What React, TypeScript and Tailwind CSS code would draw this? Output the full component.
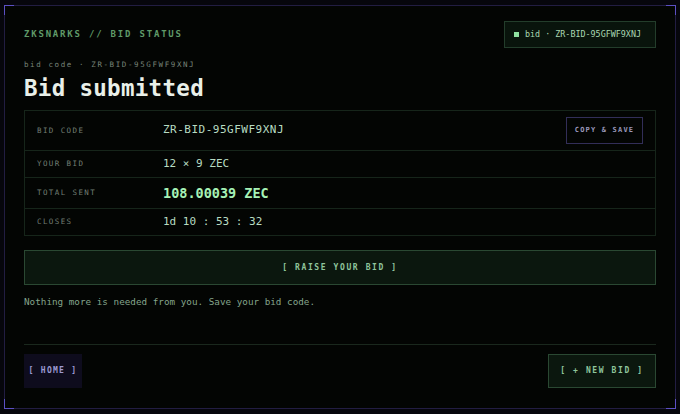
import type { ReactNode } from 'react'

const mono = { fontFamily: '"DejaVu Sans Mono", "Liberation Mono", monospace' }

interface RowProps {
  label: string
  height: string
  last?: boolean
  children: ReactNode
}

function Row({ label, height, last, children }: RowProps) {
  return (
    <div
      className={`flex items-center px-3 ${height} ${last ? '' : 'border-b border-[#16251a]'}`}
    >
      <span className="w-[126px] shrink-0 text-[7.5px] tracking-[1.4px] text-[#727e73]">
        {label}
      </span>
      <div className="flex flex-1 items-center justify-between">{children}</div>
    </div>
  )
}

function Corner({ pos }: { pos: string }) {
  return <span className={`absolute h-[10px] w-[10px] border-[#5c50c4] ${pos}`} />
}

export default function App() {
  return (
    <div className="h-[414px] w-[680px] bg-[#06060c] px-[4px] pt-[5px]" style={mono}>
      <div className="relative flex h-[404px] flex-col border border-[#221d42] bg-[#030503] px-[19px] pt-[15px] pb-[20px]">
        <Corner pos="-left-px -top-px border-l border-t" />
        <Corner pos="-right-px -top-px border-r border-t" />
        <Corner pos="-left-px -bottom-px border-l border-b" />
        <Corner pos="-right-px -bottom-px border-r border-b" />

        {/* Header */}
        <div className="flex items-center justify-between">
          <span className="text-[9px] font-semibold tracking-[1.8px] text-[#5f9a68]">
            ZKSNARKS // BID STATUS
          </span>
          <div className="flex h-[27px] w-[152px] shrink-0 items-center gap-[6px] border border-[#233d2b] bg-[#09140c] px-[9px] whitespace-nowrap">
            <span className="h-[5px] w-[5px] shrink-0 bg-[#8fe0a0]" />
            <span className="text-[8.4px] text-[#a9d8b2]">bid · ZR-BID-95GFWF9XNJ</span>
          </div>
        </div>

        <div className="mt-[12px] text-[7.5px] leading-[10px] tracking-[1.6px] text-[#778478]">
          bid code · ZR-BID-95GFWF9XNJ
        </div>
        <h1 className="mt-[6px] text-[22.5px] leading-[24px] font-bold tracking-[0.3px] text-[#e9f0e9]">
          Bid submitted
        </h1>

        {/* Details */}
        <div className="mt-[10px] border border-[#16251a]">
          <Row label="BID CODE" height="h-[40px]">
            <span className="text-[11px] tracking-[0.5px] text-[#b8dcc2]">ZR-BID-95GFWF9XNJ</span>
            <button className="flex h-[27px] w-[77px] items-center justify-center border border-[#322e58] text-[7px] font-bold tracking-[1.2px] text-[#9a98ba]">
              COPY &amp; SAVE
            </button>
          </Row>
          <Row label="YOUR BID" height="h-[27px]">
            <span className="text-[11px] text-[#b8dcc2]">12 × 9 ZEC</span>
          </Row>
          <Row label="TOTAL SENT" height="h-[31px]">
            <span className="text-[13.5px] font-bold text-[#a6f2b6]">108.00039 ZEC</span>
          </Row>
          <Row label="CLOSES" height="h-[26px]" last>
            <span className="text-[11px] text-[#b8dcc2]">1d 10 : 53 : 32</span>
          </Row>
        </div>

        <button className="mt-[14px] flex h-[35px] items-center justify-center border border-[#2a4832] bg-[#0b170e] text-[8px] font-bold tracking-[1.6px] text-[#8fc59c]">
          [ RAISE YOUR BID ]
        </button>

        <p className="mt-[11px] text-[9.3px] leading-[12px] text-[#84a48b]">
          Nothing more is needed from you. Save your bid code.
        </p>

        {/* Footer */}
        <div className="mt-auto border-t border-[#1a281d] pt-[9px]">
          <div className="flex items-center justify-between">
            <button className="flex h-[34px] w-[58px] items-center justify-center bg-[#0e0c1d] text-[8px] font-bold tracking-[1.3px] text-[#9c9ad2]">
              [ HOME ]
            </button>
            <button className="flex h-[34px] w-[108px] items-center justify-center border border-[#2a4832] bg-[#0b170e] text-[8px] font-bold tracking-[1.6px] text-[#8fc59c]">
              [ + NEW BID ]
            </button>
          </div>
        </div>
      </div>
    </div>
  )
}
